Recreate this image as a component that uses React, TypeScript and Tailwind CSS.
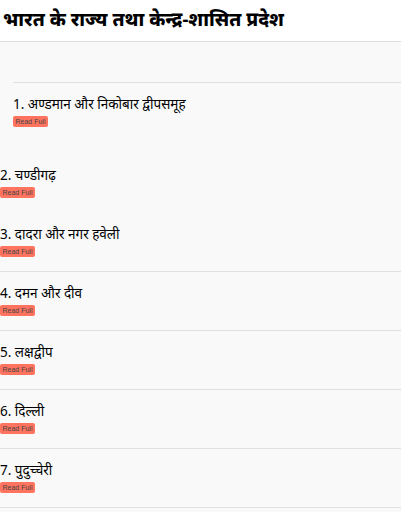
import React from "react";

const items = [
  "दादरा और नगर हवेली",
  "दमन और दीव",
  "लक्षद्वीप",
  "दिल्ली",
  "पुदुच्चेरी",
];

function ReadFull() {
  return (
    <button className="block h-[11px] w-[35px] rounded-[2px] bg-[#ff735f] text-[7px] leading-[11px] text-[#444] font-['Liberation_Sans',sans-serif] text-center">
      Read Full
    </button>
  );
}

function Item({ title, className }: { title: string; className: string }) {
  return (
    <div className={"pt-[12px] pb-[14px] " + className}>
      <div className="text-[13.5px] leading-[18px]">{title}</div>
      <div className="mt-[3px]">
        <ReadFull />
      </div>
    </div>
  );
}

export default function App() {
  return (
    <div className="w-[401px] h-[512px] overflow-hidden bg-[#f9f9f9] font-['Noto_Sans','DejaVu_Sans',sans-serif] text-black">
      <header className="h-[42px] bg-white border-b border-[#dddddd] pl-[3px] pt-[5px]">
        <h1 className="text-[19px] font-extrabold leading-[28px] font-['Noto_Serif','DejaVu_Serif','Noto_Sans',serif]">
          भारत के राज्य तथा केन्द्र-शासित प्रदेश
        </h1>
      </header>
      <div className="pt-[40px]">
        <Item
          title="1. अण्डमान और निकोबार द्वीपसमूह"
          className="ml-[13px] border-t border-[#e0e0e0]"
        />
        <Item title="2. चण्डीगढ़" className="mt-[12px] border-t border-transparent" />
        {items.map((t, i) => (
          <Item
            key={i}
            title={`${i + 3}. ${t}`}
            className={"border-t " + (i === 0 ? "border-transparent" : "border-[#e0e0e0]")}
          />
        ))}
        <div className="border-t border-[#e0e0e0]" />
      </div>
    </div>
  );
}
